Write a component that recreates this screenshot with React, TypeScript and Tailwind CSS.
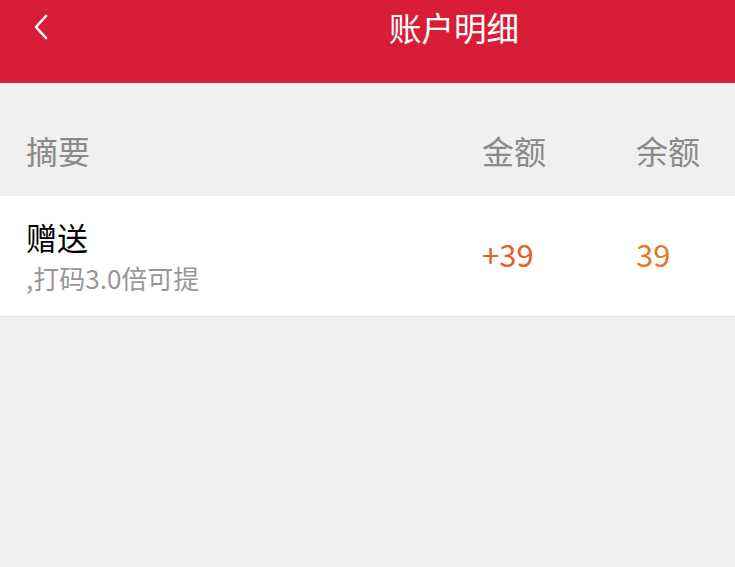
const font = { fontFamily: '"Noto Sans CJK SC", "Noto Sans", sans-serif' };

function BackArrow() {
  return (
    <svg width="16" height="26" viewBox="0 0 16 26" fill="none">
      <path d="M13 2 L3 13 L13 24" stroke="white" strokeWidth="2.6" strokeLinecap="round" strokeLinejoin="round" />
    </svg>
  );
}

export default function App() {
  return (
    <div className="min-h-[567px] w-full bg-[#f0f0f0]" style={font}>
      {/* top bar */}
      <header className="h-[83px] bg-[#d81e37]">
        <div className="h-[54px] flex items-center">
          <button className="pl-[33px] flex items-center">
            <BackArrow />
          </button>
          <h1 className="ml-auto pr-[216px] text-[32.5px] leading-none text-white">账户明细</h1>
        </div>
      </header>

      {/* column labels */}
      <div className="h-[113px] pt-[21px] flex items-center text-[32px] text-[#8a8a8a]">
        <span className="flex-1 pl-[26px]">摘要</span>
        <span className="w-[154px]">金额</span>
        <span className="w-[99px]">余额</span>
      </div>

      {/* record */}
      <div className="h-[121px] bg-white border-b border-[#e3e3e3] flex items-center">
        <div className="flex-1 pl-[26px] flex flex-col">
          <span className="text-[31px] leading-[36px] text-black">赠送</span>
          <span className="mt-[8px] text-[26px] leading-[30px] text-[#979797]">,打码3.0倍可提</span>
        </div>
        <span className="w-[154px] pb-[3px] text-[31px] text-[#e0612c]">+39</span>
        <span className="w-[99px] pb-[3px] text-[31px] text-[#e2792d]">39</span>
      </div>
    </div>
  );
}
